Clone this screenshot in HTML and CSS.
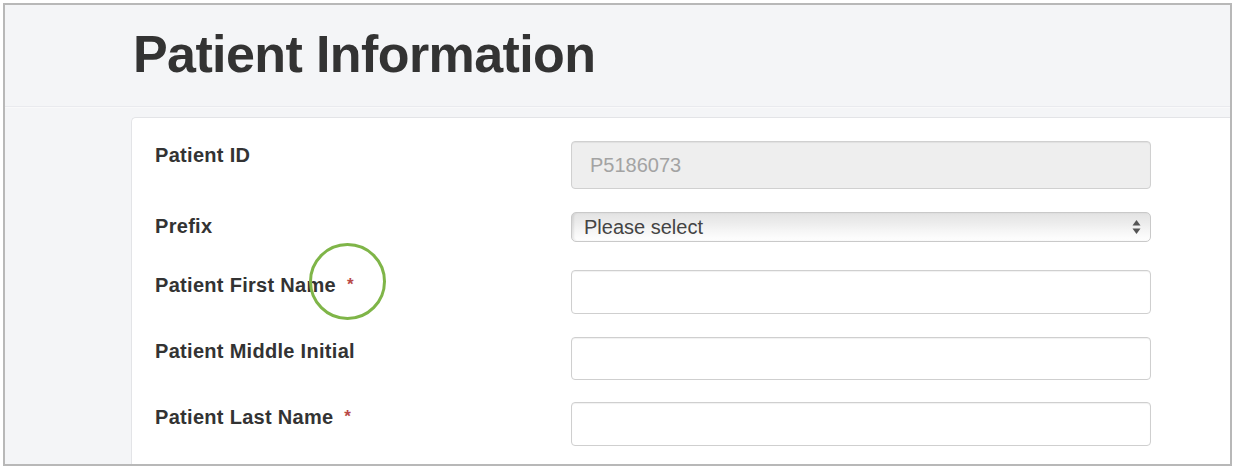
FILE: index.html
```html
<!DOCTYPE html>
<html lang="en">
<head>
<meta charset="utf-8">
<title>Patient Information</title>
<link rel="stylesheet" href="styles.css">
</head>
<body>
<div class="frame">
  <header class="page-header">
    <h1 class="title">Patient Information</h1>
  </header>
  <section class="card">
    <form class="form">
      <div class="row row-id">
        <label class="label" for="pid">Patient ID</label>
        <input class="input input-readonly" id="pid" type="text" value="P5186073" readonly>
      </div>
      <div class="row row-select">
        <label class="label" for="prefix">Prefix</label>
        <div class="select-wrap">
          <select class="select" id="prefix">
            <option>Please select</option>
          </select>
          <svg class="select-arrows" width="9" height="16" viewBox="0 0 9 16" aria-hidden="true">
            <path d="M4.5 1 L8.5 6.5 L0.5 6.5 Z" fill="#555"/>
            <path d="M0.5 9.5 L8.5 9.5 L4.5 15 Z" fill="#555"/>
          </svg>
        </div>
      </div>
      <div class="row row-first">
        <label class="label" for="first">Patient First Name <span class="req">*</span></label>
        <input class="input" id="first" type="text">
      </div>
      <div class="row row-middle">
        <label class="label" for="middle">Patient Middle Initial</label>
        <input class="input" id="middle" type="text">
      </div>
      <div class="row">
        <label class="label" for="last">Patient Last Name <span class="req">*</span></label>
        <input class="input" id="last" type="text">
      </div>
    </form>
  </section>
  <div class="highlight-ring" aria-hidden="true"></div>
</div>
</body>
</html>
```

FILE: styles.css
```css
html, body {
  margin: 0;
  padding: 0;
  background: #ffffff;
}

body {
  font-family: "Liberation Sans", Arial, Helvetica, sans-serif;
  color: #333333;
}

.frame {
  position: relative;
  box-sizing: border-box;
  width: 1229px;
  height: 463px;
  margin: 3px 0 0 3px;
  border: 2px solid #b8b8b8;
  background: #f4f5f7;
  overflow: hidden;
}

.page-header {
  padding: 19px 0 22px 128px;
  border-bottom: 1px solid #e9eaee;
  box-shadow: 0 1px 0 #f9f9fa;
}

.title {
  margin: 0;
  font-size: 52px;
  line-height: 60px;
  font-weight: bold;
  letter-spacing: -0.6px;
  color: #333333;
}

.card {
  margin: 10px -20px 0 126px;
  height: 400px;
  background: #ffffff;
  border-top: 1px solid #e3e4e7;
  border-left: 1px solid #e3e4e7;
  border-radius: 5px 0 0 0;
  padding: 23px 0 0 23px;
}

.form {
  display: flex;
  flex-direction: column;
  gap: 22px;
}

.row {
  display: grid;
  grid-template-columns: 416px 580px;
  align-items: start;
}

.row-id,
.row-first {
  margin-bottom: 1px;
}

.row-select {
  margin-bottom: 6px;
}

.label {
  font-size: 20px;
  line-height: 23px;
  font-weight: bold;
  padding-top: 3px;
  color: #333333;
  letter-spacing: 0.3px;
}

.req {
  font-size: 17px;
  font-weight: bold;
  color: #b94a48;
  margin-left: 5px;
  vertical-align: 2px;
}

.input {
  box-sizing: border-box;
  width: 580px;
  height: 44px;
  margin: 0;
  border: 1px solid #cfcfcf;
  border-radius: 4px;
  background: #ffffff;
  box-shadow: inset 0 1px 1px rgba(0, 0, 0, 0.06);
  font-family: "Liberation Sans", Arial, sans-serif;
  font-size: 20px;
  color: #555555;
  padding: 0 18px;
  outline: none;
}

.row-middle .input {
  height: 43px;
}

.input-readonly {
  height: 48px;
  background: #eeeeee;
  color: #a3a3a3;
  border-color: #d0d0d0;
}

.select-wrap {
  position: relative;
  width: 580px;
  height: 30px;
}

.select {
  -webkit-appearance: none;
  appearance: none;
  box-sizing: border-box;
  width: 580px;
  height: 30px;
  margin: 0;
  border: 1px solid #c9c9c9;
  border-radius: 5px;
  background: linear-gradient(to bottom, #e3e3e3 0%, #ececec 35%, #f6f6f6 65%, #ffffff 100%);
  box-shadow: inset 2px 0 2px rgba(0, 0, 0, 0.08);
  font-family: "Liberation Sans", Arial, sans-serif;
  font-size: 20px;
  line-height: 28px;
  color: #444444;
  padding: 0 30px 0 12px;
  outline: none;
}

.select-arrows {
  position: absolute;
  right: 10px;
  top: 7px;
  pointer-events: none;
}

.highlight-ring {
  position: absolute;
  left: 304px;
  top: 238px;
  width: 71px;
  height: 71px;
  border: 3px solid #7fb548;
  border-radius: 50%;
}
```
